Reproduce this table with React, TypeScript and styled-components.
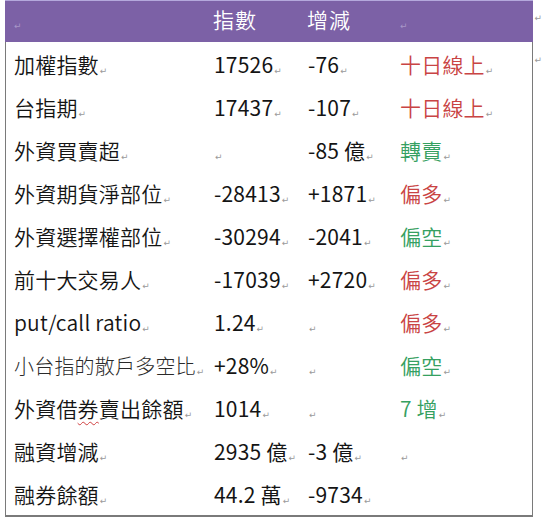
import React from "react";
import styled, { createGlobalStyle } from "styled-components";

const GlobalStyle = createGlobalStyle`
  html, body {
    margin: 0;
    padding: 0;
    background: #ffffff;
  }
  body {
    font-family: "Noto Sans CJK TC", "Noto Sans", sans-serif;
    color: #141414;
  }
`;

const COLS = "200px 94px 92px 1fr";

type Tone = "red" | "green" | undefined;

type RowData = {
  name: string;
  index: string | null;
  change: string | null;
  signal: string | null;
  tone?: Tone;
  light?: boolean;
  squiggle?: number;
};

const rows: RowData[] = [
  { name: "加權指數", index: "17526", change: "-76", signal: "十日線上", tone: "red" },
  { name: "台指期", index: "17437", change: "-107", signal: "十日線上", tone: "red" },
  { name: "外資買賣超", index: "", change: "-85 億", signal: "轉賣", tone: "green" },
  { name: "外資期貨淨部位", index: "-28413", change: "+1871", signal: "偏多", tone: "red" },
  { name: "外資選擇權部位", index: "-30294", change: "-2041", signal: "偏空", tone: "green" },
  { name: "前十大交易人", index: "-17039", change: "+2720", signal: "偏多", tone: "red" },
  { name: "put/call ratio", index: "1.24", change: "", signal: "偏多", tone: "red" },
  { name: "小台指的散戶多空比", index: "+28%", change: "", signal: "偏空", tone: "green", light: true },
  { name: "外資借券賣出餘額", index: "1014", change: "", signal: "7 增", tone: "green", squiggle: 3 },
  { name: "融資增減", index: "2935 億", change: "-3 億", signal: "" },
  { name: "融券餘額", index: "44.2 萬", change: "-9734", signal: null },
];

const Page = styled.div`
  display: flex;
  align-items: flex-start;
  padding-left: 5px;
`;

const Table = styled.div`
  width: 532px;
  display: flex;
  flex-direction: column;
`;

const Header = styled.div`
  display: grid;
  grid-template-columns: ${COLS};
  height: 41px;
  background: #7c61a6;
  border-top: 1px solid #b4a8dc;
  color: #ffffff;
  align-items: center;
`;

const Body = styled.div`
  border-left: 1px solid #7a7a7a;
  border-right: 1px solid #7a7a7a;
  border-bottom: 2px solid #7a7a7a;
`;

const Row = styled.div`
  display: grid;
  grid-template-columns: ${COLS};
  height: 43px;
  align-items: center;
`;

const Cell = styled.div<{ $tone?: Tone; $light?: boolean; $thin?: boolean }>`
  padding-left: 8px;
  padding-top: 3px;
  font-size: ${(p) => (p.$light ? "20px" : "21px")};
  font-weight: ${(p) => (p.$light ? 300 : p.$thin ? 350 : 400)};
  line-height: 1;
  white-space: nowrap;
  letter-spacing: 0.2px;
  color: ${(p) =>
    p.$tone === "red"
      ? "#c94444"
      : p.$tone === "green"
      ? "#35a061"
      : p.$light
      ? "#2a2a2a"
      : "#141414"};
`;

const HeadCell = styled.div`
  padding-left: 8px;
  padding-bottom: 4px;
  font-size: 21px;
  font-weight: 350;
  line-height: 1;
  color: #ffffff;
  letter-spacing: 1px;
`;

const Mark = styled.span<{ $head?: boolean }>`
  font-family: "DejaVu Sans", sans-serif;
  font-size: 9px;
  font-weight: 400;
  color: ${(p) => (p.$head ? "#a896c8" : "#9a9a9a")};
  margin-left: 1px;
  vertical-align: -1px;
`;

const Squiggle = styled.span`
  text-decoration: underline wavy #d04040;
  text-decoration-thickness: 1px;
  text-underline-offset: 4px;
`;

const EndMarks = styled.div`
  display: flex;
  flex-direction: column;
  padding-left: 1px;
`;

const EndMark = styled.div<{ $h: number }>`
  height: ${(p) => p.$h}px;
  display: flex;
  align-items: center;
  font-family: "DejaVu Sans", sans-serif;
  font-size: 9px;
  color: #9a9a9a;
`;

const Name = ({ row }: { row: RowData }) => {
  if (row.squiggle === undefined) return <>{row.name}</>;
  const i = row.squiggle;
  return (
    <>
      {row.name.slice(0, i)}
      <Squiggle>{row.name.slice(i, i + 1)}</Squiggle>
      {row.name.slice(i + 1)}
    </>
  );
};

const Value = ({ text }: { text: string | null }) =>
  text === null ? null : (
    <>
      {text}
      <Mark>↵</Mark>
    </>
  );

export default function App() {
  return (
    <>
      <GlobalStyle />
      <Page>
        <Table>
          <Header>
            <HeadCell>
              <Mark $head>↵</Mark>
            </HeadCell>
            <HeadCell>指數</HeadCell>
            <HeadCell>增減</HeadCell>
            <HeadCell>
              <Mark $head>↵</Mark>
            </HeadCell>
          </Header>
          <Body>
            {rows.map((r) => (
              <Row key={r.name}>
                <Cell $light={r.light} $thin>
                  <Name row={r} />
                  <Mark>↵</Mark>
                </Cell>
                <Cell>
                  <Value text={r.index} />
                </Cell>
                <Cell>
                  <Value text={r.change} />
                </Cell>
                <Cell $tone={r.tone} $thin>
                  <Value text={r.signal} />
                </Cell>
              </Row>
            ))}
          </Body>
        </Table>
        <EndMarks>
          <EndMark $h={36}>↵</EndMark>
          <EndMark $h={48}>↵</EndMark>
        </EndMarks>
      </Page>
    </>
  );
}
